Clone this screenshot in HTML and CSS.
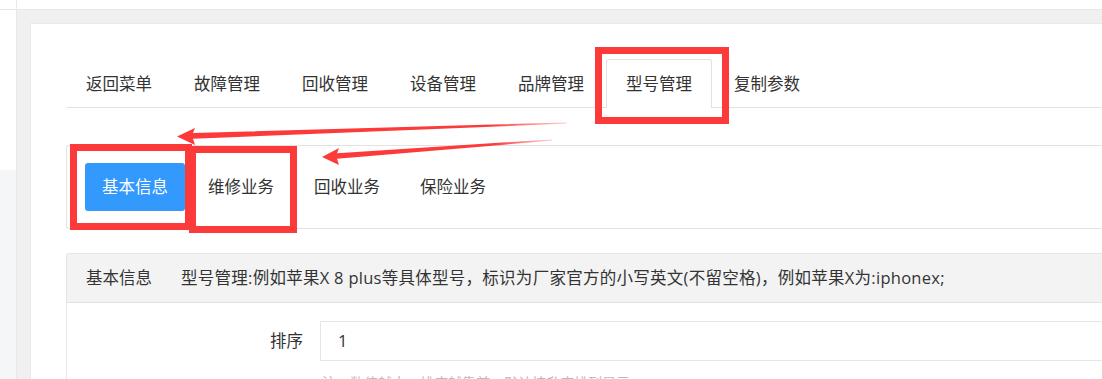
FILE: index.html
```html
<!DOCTYPE html>
<html lang="zh-CN">
<head>
<meta charset="utf-8">
<title>型号管理</title>
<link rel="stylesheet" href="styles.css">
</head>
<body>
<div class="layout">
  <div class="top-left"></div>
  <div class="top-right"></div>
  <aside class="side"><div class="side-top"></div></aside>
  <main class="content">
    <section class="card">
      <ul class="tabs">
        <li>返回菜单</li>
        <li>故障管理</li>
        <li>回收管理</li>
        <li>设备管理</li>
        <li>品牌管理</li>
        <li class="active">型号管理</li>
        <li>复制参数</li>
      </ul>
      <div class="subbar">
        <span class="btn primary">基本信息</span>
        <span class="btn">维修业务</span>
        <span class="btn">回收业务</span>
        <span class="btn">保险业务</span>
      </div>
      <div class="panel">
        <div class="panel-head">
          <span class="head-title">基本信息</span>
          <span class="head-desc">型号管理:例如苹果X 8 plus等具体型号，标识为厂家官方的小写英文(不留空格)，例如苹果X为:iphonex;</span>
        </div>
        <div class="panel-body">
          <div class="form-row">
            <label class="form-label">排序</label>
            <div class="form-field">
              <div class="input">1</div>
              <div class="hint">注：数值越大，排序越靠前，默认按升序排列显示</div>
            </div>
          </div>
        </div>
      </div>
    </section>
  </main>
</div>

<div class="annot">
  <div class="rbox box-a"></div>
  <div class="rbox box-b"></div>
  <div class="rbox box-c"></div>
  <svg class="arrows" width="1102" height="379" viewBox="0 0 1102 379">
    <defs>
      <linearGradient id="fade1" gradientUnits="userSpaceOnUse" x1="177" y1="0" x2="567" y2="0">
        <stop offset="0" stop-color="#fd3a3a" stop-opacity="1"/>
        <stop offset="0.8" stop-color="#fd3a3a" stop-opacity="1"/>
        <stop offset="1" stop-color="#fd3a3a" stop-opacity="0.25"/>
      </linearGradient>
      <linearGradient id="fade2" gradientUnits="userSpaceOnUse" x1="322" y1="0" x2="552" y2="0">
        <stop offset="0" stop-color="#fd3a3a" stop-opacity="1"/>
        <stop offset="0.75" stop-color="#fd3a3a" stop-opacity="1"/>
        <stop offset="1" stop-color="#fd3a3a" stop-opacity="0.25"/>
      </linearGradient>
    </defs>
    <polygon fill="url(#fade1)" points="177,136.5 195,128 193,133 567,122.4 567,123.6 193,138.8 195,145"/>
    <polygon fill="url(#fade2)" points="322,157 339,148 337,153.3 552,139.4 552,140.6 337,158.7 339,165"/>
  </svg>
</div>
</body>
</html>
```

FILE: styles.css
```css
html, body {
  margin: 0;
  padding: 0;
  overflow: hidden;
  background: #ffffff;
}

body {
  font-family: "Open Sans", "Noto Sans CJK SC", sans-serif;
  color: #333333;
  position: relative;
  width: 1102px;
  height: 379px;
}

.layout {
  display: grid;
  grid-template-columns: 17px 1fr;
  grid-template-rows: 10px 1fr;
  width: 1300px;
  height: 379px;
}

.top-left {
  box-sizing: border-box;
  border-right: 1px solid #e8e8e8;
  border-bottom: 1px solid #e8e8e8;
  background: #ffffff;
}

.top-right {
  box-sizing: border-box;
  border-bottom: 1px solid #e8e8e8;
  background: #ffffff;
}

.side {
  box-sizing: border-box;
  border-right: 1px solid #e8e8e8;
  background: #f5f6f7;
}

.side-top {
  height: 160px;
  background: #ffffff;
}

.content {
  background: #f0f0f0;
  padding: 13px 0 0 13px;
  min-width: 0;
  overflow: hidden;
}

.card {
  background: #ffffff;
  border: 1px solid #e9e9e9;
  border-right: none;
  height: 400px;
  padding: 35px 0 0 35px;
}

/* main tabs */
.tabs {
  list-style: none;
  margin: 0;
  padding: 0;
  display: flex;
  border-bottom: 1px solid #e2e2e2;
  height: 48px;
}

.tabs li {
  box-sizing: border-box;
  height: 49px;
  line-height: 48px;
  padding: 0 19px;
  margin-right: 2px;
  font-size: 16.5px;
  color: #333333;
  border: 1px solid transparent;
  border-bottom: none;
  border-radius: 3px 3px 0 0;
  white-space: nowrap;
}

.tabs li.active {
  border-color: #e2e2e2;
  background: #ffffff;
  position: relative;
}

/* sub buttons */
.subbar {
  margin-top: 37px;
  border: 1px solid #e2e2e2;
  border-right: none;
  border-radius: 3px 0 0 3px;
  padding: 17px 18px;
  display: flex;
  gap: 6px;
}

.btn {
  height: 48px;
  line-height: 48px;
  padding: 0 17px;
  font-size: 16.5px;
  color: #333333;
  border-radius: 3px;
  white-space: nowrap;
}

.btn.primary {
  background: #3399fc;
  color: #ffffff;
}

/* info panel */
.panel {
  margin-top: 24px;
  border: 1px solid #e6e6e6;
  border-right: none;
  border-radius: 3px 0 0 0;
}

.panel-head {
  height: 48px;
  line-height: 48px;
  background: #f3f3f3;
  border-bottom: 1px solid #e2e2e2;
  padding-left: 19px;
  font-size: 16.5px;
  color: #333333;
  white-space: nowrap;
  display: flex;
  gap: 29px;
}

.head-desc {
  letter-spacing: 0.27px;
}

.panel-body {
  padding-top: 18px;
}

.form-row {
  display: flex;
}

.form-label {
  box-sizing: border-box;
  width: 253px;
  padding-right: 17px;
  text-align: right;
  font-size: 16.5px;
  line-height: 40px;
  color: #333333;
}

.form-field {
  flex: 1;
}

.input {
  box-sizing: border-box;
  height: 40px;
  line-height: 38px;
  border: 1px solid #e6e6e6;
  border-right: none;
  padding-left: 17px;
  font-size: 16.5px;
  color: #333333;
}

.hint {
  margin-top: 12px;
  padding-left: 2px;
  font-size: 14px;
  line-height: 20px;
  color: #bbbbbb;
}

/* annotations */
.annot {
  position: absolute;
  left: 0;
  top: 0;
  width: 1102px;
  height: 379px;
  pointer-events: none;
}

.rbox {
  position: absolute;
  box-sizing: border-box;
  border: 7px solid #fd3a3a;
}

.box-a {
  left: 595px;
  top: 47px;
  width: 134px;
  height: 77px;
}

.box-b {
  left: 70px;
  top: 144px;
  width: 122px;
  height: 86px;
}

.box-c {
  left: 189px;
  top: 146px;
  width: 108px;
  height: 87px;
}

.arrows {
  position: absolute;
  left: 0;
  top: 0;
}
```
